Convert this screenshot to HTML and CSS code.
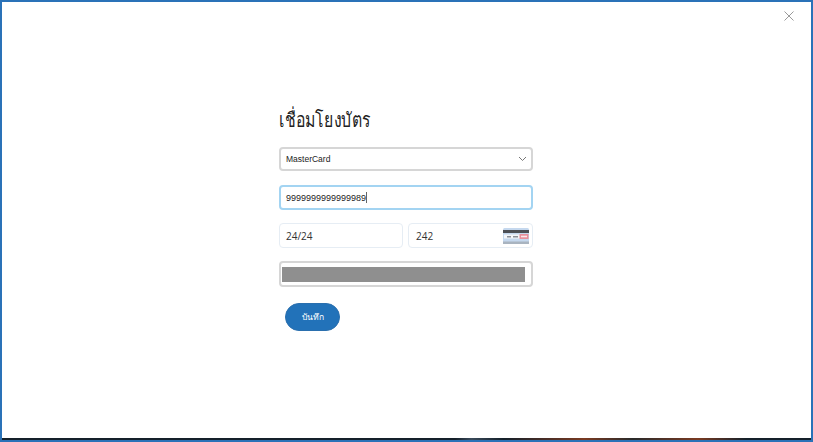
FILE: index.html
```html
<!DOCTYPE html>
<html lang="th">
<head>
<meta charset="utf-8">
<title>เชื่อมโยงบัตร</title>
<link rel="stylesheet" href="styles.css">
</head>
<body>
<div class="frame">
  <main class="modal">
    <button class="close" aria-label="close">
      <svg width="12" height="12" viewBox="0 0 12 12"><path d="M1.5 1.5l9 9M10.5 1.5l-9 9" stroke="#9a9a9a" stroke-width="1" fill="none"/></svg>
    </button>
    <form class="form">
      <h1 class="title"><span class="title-text">เชื่อมโยงบัตร</span></h1>
      <div class="field select">
        <span>MasterCard</span>
        <svg width="9" height="6" viewBox="0 0 9 6"><path d="M1 1l3.5 3.5L8 1" stroke="#777" stroke-width="1" fill="none"/></svg>
      </div>
      <div class="field focused"><span>9999999999999989</span><i class="caret"></i></div>
      <div class="row">
        <div class="field light">24/24</div>
        <div class="field light cvv">
          <span>242</span>
          <svg class="card" width="26" height="16" viewBox="0 0 26 16">
            <rect width="26" height="16" rx="1.5" fill="#c5d8ee"/>
            <rect y="2" width="26" height="3" fill="#4c4f55"/>
            <rect x="1" y="6.5" width="24" height="4" fill="#f4f6f9"/>
            <rect x="4" y="8" width="4" height="1.5" fill="#8a8f98"/>
            <rect x="10" y="8" width="5" height="1.5" fill="#8a8f98"/>
            <rect x="16.5" y="6" width="9" height="5" fill="#e98f9b"/>
            <rect x="18" y="7.7" width="6" height="1.6" fill="#fbe9ea"/>
            <rect y="13.5" width="26" height="2.5" fill="#a9b4c0"/>
          </svg>
        </div>
      </div>
      <div class="field masked"><div class="redact"></div></div>
      <button class="save" type="button">บันทึก</button>
    </form>
    <div class="strip"></div>
  </main>
</div>
</body>
</html>
```
FILE: styles.css
```css
* { box-sizing: border-box; }
html, body { margin: 0; height: 100%; background: #fff; }
.frame {
  width: 813px;
  height: 442px;
  border: 2px solid #2a72b8;
  background: #fff;
  overflow: hidden;
}
.modal {
  position: relative;
  height: 100%;
  display: flex;
  flex-direction: column;
  align-items: flex-start;
  padding: 104px 0 0 277px;
  font-family: "Liberation Sans", "Noto Sans", sans-serif;
}
.close {
  position: absolute;
  top: 8px;
  right: 16px;
  padding: 0;
  border: 0;
  background: none;
  display: flex;
}
.form {
  width: 254px;
  flex: 1;
  display: flex;
  flex-direction: column;
}
.title {
  margin: 0 0 13px;
  height: 28px;
  font-size: 20px;
  line-height: 28px;
  font-weight: 400;
  color: #222;
}
.title-text {
  display: inline-block;
  transform: scaleX(0.79);
  transform-origin: left center;
}
.field {
  height: 25px;
  margin-bottom: 13px;
  padding: 0 6px;
  display: flex;
  align-items: center;
  border-radius: 4px;
  font-size: 9px;
  color: #222;
}
.select {
  height: 24px;
  margin-bottom: 14px;
  border: 2px solid #d6d6d6;
  justify-content: space-between;
  padding: 0 4px 0 5px;
  font-size: 8.5px;
}
.focused {
  border: 2px solid #a3d4f2;
  padding: 0 5px;
}
.caret {
  width: 1px;
  height: 11px;
  background: #666;
}
.row {
  display: grid;
  grid-template-columns: 124px 125px;
  column-gap: 5px;
}
.light {
  border: 1px solid #e6edf4;
  font-family: "Open Sans", sans-serif;
  font-size: 10px;
  color: #333;
}
.cvv {
  justify-content: space-between;
  padding: 0 3px 0 7px;
}
.card { flex: none; }
.masked {
  height: 26px;
  margin-bottom: 16px;
  border: 2px solid #d6d6d6;
  padding: 1px 6px 0 1px;
}
.redact {
  width: 100%;
  height: 15px;
  background: #8f8f8f;
}
.save {
  align-self: flex-start;
  margin-left: 6px;
  width: 55px;
  height: 28px;
  padding: 0;
  border: 1px solid #2a6fae;
  border-radius: 14px;
  background: #2272b9;
  color: #fff;
  font-family: inherit;
  font-size: 8.5px;
}
.strip {
  position: absolute;
  left: 0;
  right: 0;
  bottom: 0;
  height: 2px;
  background: linear-gradient(90deg, #15202a 0 56%, #3a4a5a 58%, #15202a 62%, #7a3a22 72%, #2a2a2a 78%, #7a3a22 86%, #15202a 92%, #15202a 100%);
}
```
